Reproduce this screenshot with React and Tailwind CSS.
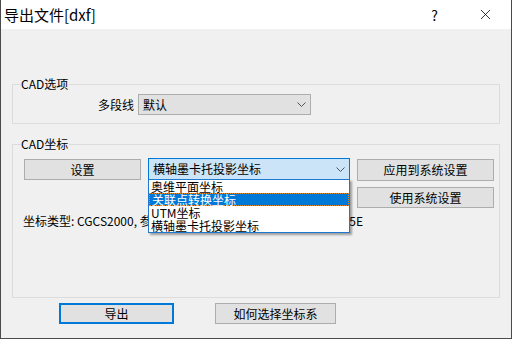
import { X } from 'lucide-react';

const font = { fontFamily: '"Noto Sans CJK SC", "Noto Sans", sans-serif' };

function Chevron() {
  return (
    <svg width="9" height="5" viewBox="0 0 9 5" className="shrink-0">
      <path d="M0.5 0.5 L4.5 4.5 L8.5 0.5" fill="none" stroke="#555" strokeWidth="1" />
    </svg>
  );
}

function Btn({ children, className = '' }) {
  return (
    <div
      className={`flex items-center justify-center bg-[#e1e1e1] border border-[#adadad] text-[12px] leading-none text-black ${className}`}
    >
      {children}
    </div>
  );
}

function Group({ label, className = '', children }) {
  return (
    <div className={`relative border border-[#dcdcdc] ${className}`}>
      <span className="absolute left-[8px] -top-[9px] bg-[#f0f0f0] pr-[1px] text-[12px] leading-[16px] text-black">
        {label}
      </span>
      {children}
    </div>
  );
}

const items = ['奥维平面坐标', '关联点转换坐标', 'UTM坐标', '横轴墨卡托投影坐标'];

export default function App() {
  return (
    <div
      style={font}
      className="w-[512px] h-[339px] bg-[#f0f0f0] border-l border-r border-b border-[#4a4a4a] flex flex-col overflow-hidden"
    >
      <div className="h-[29px] bg-white flex items-center shrink-0">
        <span className="pl-[3px] text-[15px] text-black leading-none">导出文件[dxf]</span>
        <span className="ml-auto mr-[39px] text-[14px] text-black leading-none">?</span>
        <X size={17} strokeWidth={1.1} className="mr-[17px] text-black" />
      </div>

      <div className="px-[11px] pt-[55px] flex flex-col">
        <Group label="CAD选项" className="h-[40px]">
          <div className="flex items-center mt-[9px]">
            <div className="w-[125px] pr-[4px] text-right text-[12px] leading-none">多段线</div>
            <div className="w-[173px] h-[21px] bg-[#e1e1e1] border border-[#adadad] flex items-center pl-[4px] pr-[4px] text-[12px]">
              <span className="flex-1">默认</span>
              <Chevron />
            </div>
          </div>
        </Group>

        <Group label="CAD坐标" className="h-[154px] mt-[20px]">
          <div className="flex items-start mt-[13px] pl-[11px]">
            <Btn className="w-[117px] h-[21px] mt-[1px]">设置</Btn>
            <div className="relative ml-[7px]">
              <div className="w-[202px] h-[22px] bg-[#cce4f7] border border-[#0078d7] flex items-center pl-[4px] pr-[4px] text-[12px]">
                <span className="flex-1">横轴墨卡托投影坐标</span>
                <Chevron />
              </div>
              {/* open dropdown list */}
              <div className="absolute left-0 top-[21px] w-[202px] bg-white border border-[#1e78d0] shadow-[2px_2px_2px_rgba(0,0,0,0.35)] z-10 text-[12px] leading-[13px]">
                {items.map((t, i) => (
                  <div
                    key={t}
                    className={
                      i === 1
                        ? 'h-[13px] pl-[2px] bg-[#0078d7] text-white border border-dotted border-[#e08a2b] flex items-center'
                        : 'h-[13px] pl-[2px] flex items-center'
                    }
                  >
                    {t}
                  </div>
                ))}
              </div>
            </div>
            <div className="ml-[7px] flex flex-col gap-[6px] mt-[1px]">
              <Btn className="w-[137px] h-[22px]">应用到系统设置</Btn>
              <Btn className="w-[137px] h-[21px]">使用系统设置</Btn>
            </div>
          </div>
          <div className="mt-[5px] ml-[10px] w-[340px] flex justify-between text-[12px] leading-[16px] whitespace-nowrap">
            <span>坐标类型: CGCS2000, 参</span>
            <span>05E</span>
          </div>
        </Group>

        <div className="flex mt-[5px]">
          <div className="ml-[47px] w-[115px] h-[21px] bg-[#e1e1e1] border-2 border-[#0078d7] flex items-center justify-center text-[12px] leading-none">
            导出
          </div>
          <Btn className="ml-[41px] w-[121px] h-[21px]">如何选择坐标系</Btn>
        </div>
      </div>
    </div>
  );
}
